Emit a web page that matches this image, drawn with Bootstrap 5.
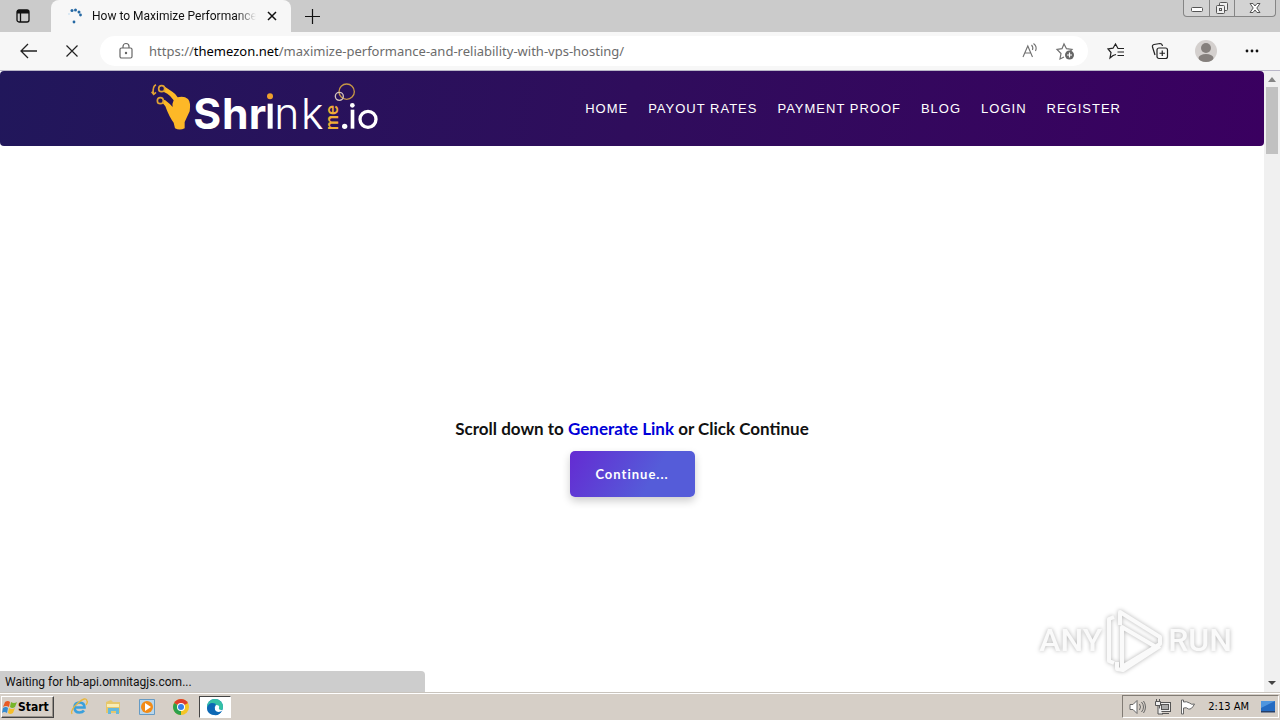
<!DOCTYPE html>
<html lang="en">
<head>
<meta charset="utf-8">
<meta name="viewport" content="width=device-width, initial-scale=1">
<title>How to Maximize Performance</title>
<link href="https://cdn.jsdelivr.net/npm/bootstrap@5.3.0/dist/css/bootstrap.min.css" rel="stylesheet">
<style>
  body { font-family: Roboto, "Open Sans", sans-serif; font-size: 12px; line-height: 16px; color: #111; background: #fff; }
  button { border: 0; background: none; padding: 0; color: inherit; }
  svg { display: block; flex: none; overflow: visible; }
  .tabstrip { height: 32px; background: #cbcbcb; }
  .tab-menu { width: 46px; }
  .browser-tab { width: 240px; background: #f7f7f7; border-radius: 8px 8px 0 0; padding: 0 12px 0 16px; margin-left: 5px; }
  .tab-title { width: 164px; margin: 0 10px 0 9px; -webkit-mask-image: linear-gradient(90deg, #000 88%, transparent); }
  .new-tab { width: 42px; }
  .window-buttons { height: 17px; margin-right: 4px; border: 1px solid #858585; border-top: 0; border-radius: 0 0 4px 4px; background: #d3d3d3; }
  .window-buttons button { width: 25px; }
  .window-buttons button + button { border-left: 1px solid #858585; }
  .window-buttons button:last-child { width: 41px; }
  .toolbar { height: 39px; padding: 0 6px; background: #f7f7f7; border-bottom: 1px solid #b9b6c8; }
  .tool { width: 44px; }
  .profile { margin: 0 2px; }
  .address { height: 30px; background: #fff; border-radius: 15px; margin: 0 6px; padding: 0 11px 0 18px; }
  .address-text { font: 13px/18px "Noto Sans", "Open Sans", sans-serif; color: #6c6c6c; margin-left: 15px; text-decoration: none; }
  .address-text b { font-weight: 400; color: #000; }
  .site-header { height: 75px; border-radius: 4px; background: linear-gradient(100deg, #21175b, #2f0d5c 50%, #3a0060); }
  .site-inner { width: 100%; max-width: 1004px; padding: 0 3px 0 20px; }
  .site-nav a { font: 13px/20px "Liberation Sans", sans-serif; letter-spacing: 1px; color: #fff; padding: 0 10px; }
  .ad-space { height: 272px; }
  .prompt { font: 700 17px/21px Lato, sans-serif; color: #111; }
  .prompt a { color: #0000d8; text-decoration: none; }
  .btn-continue { width: 125px; height: 46px; font: 700 13px/20px Lato, sans-serif; letter-spacing: 1px; color: #fff; border-radius: 5px; background: linear-gradient(120deg, #642bd2, #555cd9 65%); box-shadow: 0 4px 8px rgba(0,0,0,.2); }
  .scroll-track { width: 16px; background: #f0f0f0; }
  .scroll-track button { height: 16px; }
  .scroll-thumb { width: 12px; height: 67px; background: #c1c1c1; }
  .status { width: 425px; height: 21px; padding: 0 5px; background: #cdcdcd; border-top-right-radius: 4px; }
  .watermark { right: 48px; bottom: 20px; gap: 4px; color: #fafafa; font: 500 32px/64px Roboto, sans-serif; filter: drop-shadow(0 0 2px rgba(0,0,0,.3)); }
  .taskbar { height: 28px; background: #d6cfc7; border-top: 1px solid #c9c4bd; box-shadow: inset 0 1px #fff; }
  .start { width: 53px; height: 22px; margin-left: 1px; font: 700 12px/16px "DejaVu Sans Condensed", "DejaVu Sans", sans-serif; color: #000; border: 1px solid; border-color: #fff #444 #444 #fff; box-shadow: inset -1px -1px #98928a; }
  .quick { width: 32px; height: 22px; }
  .quick-group { margin-left: 9px; gap: 2px; }
  .quick.current { background: #fff; border: 1px solid; border-color: #444 #fff #fff #444; }
  .tray { height: 23px; border: 1px solid; border-color: #817b74 #fff #fff #817b74; padding: 0 2px 0 6px; gap: 7px; margin-right: 1px; font: 11px/16px "DejaVu Sans Condensed", "DejaVu Sans", sans-serif; color: #000; }
</style>
</head>
<body class="d-flex flex-column vh-100 overflow-hidden">

<div class="tabstrip d-flex">
  <button class="tab-menu d-flex align-items-center justify-content-center" aria-label="Tab actions">
    <svg width="16" height="16" viewBox="0 0 16 16" fill="none" stroke="#111" stroke-width="1.3"><rect x="2" y="2" width="12" height="12" rx="2"/><path d="M2 3h12M2 4.500h12" stroke-width="2"/><path d="M5.500 5v9"/></svg>
  </button>
  <div class="browser-tab d-flex align-items-center">
    <svg width="16" height="16" viewBox="0 0 16 16" fill="#2568a3"><circle cx="5" cy="2.500" r="1.500"/><circle cx="8.500" cy="2" r="1.500"/><circle cx="12" cy="4" r="1.500"/><circle cx="13.500" cy="7" r="1.400"/><circle cx="7" cy="14" r="1.400"/><circle cx="2" cy="6" r="1" fill="#d2e5f3"/></svg>
    <span class="tab-title text-nowrap">How to Maximize Performance</span>
    <button aria-label="Close tab"><svg width="12" height="12" viewBox="0 0 12 12" stroke="#111" stroke-width="1.500"><path d="M2 2l8 8M10 2l-8 8"/></svg></button>
  </div>
  <button class="new-tab d-flex align-items-center justify-content-center" aria-label="New tab"><svg width="15" height="15" viewBox="0 0 15 15" stroke="#111" stroke-width="1.200"><path d="M7.500 0v15M0 7.500h15"/></svg></button>
  <div class="window-buttons d-flex ms-auto">
    <button class="d-flex align-items-center justify-content-center" aria-label="Minimize"><svg width="14" height="14" fill="#fff" stroke="#555"><rect x="1.500" y="6.500" width="11" height="4" rx="1"/></svg></button>
    <button class="d-flex align-items-center justify-content-center" aria-label="Restore"><svg width="14" height="14" fill="#eee" stroke="#555"><rect x="4.500" y="1.500" width="8" height="8" rx="1"/><rect x="1.500" y="4.500" width="8" height="8" rx="1"/><rect x="4.500" y="7.500" width="2" height="2"/></svg></button>
    <button class="d-flex align-items-center justify-content-center" aria-label="Close"><svg width="14" height="14" fill="#fff" stroke="#555"><path d="M2 2.500h3l2 2.500 2-2.500h3L8.800 7l3.200 4.500H9L7 9l-2 2.500H2L5.200 7z"/></svg></button>
  </div>
</div>

<div class="toolbar d-flex align-items-center">
  <button class="tool d-flex justify-content-center" aria-label="Back"><svg width="17" height="16" viewBox="0 0 17 16" fill="none" stroke="#222" stroke-width="1.300"><path d="M8 1L1 8l7 7M1 8h16"/></svg></button>
  <button class="tool d-flex justify-content-center" aria-label="Stop"><svg width="14" height="14" viewBox="0 0 14 14" stroke="#222" stroke-width="1.200"><path d="M1.500 1.500l11 11M12.500 1.500l-11 11"/></svg></button>
  <div class="address d-flex align-items-center flex-grow-1">
    <svg width="16" height="18" viewBox="0 0 16 18" fill="none" stroke="#666" stroke-width="1.200"><rect x="2" y="6" width="12" height="10" rx="1.500"/><path d="M5 6V4.500a3 3 0 0 1 6 0V6"/><circle cx="8" cy="11" r=".6" fill="#666"/></svg>
    <a class="address-text text-nowrap" href="#">https://<b>themezon.net</b>/maximize-performance-and-reliability-with-vps-hosting/</a>
    <button class="ms-auto" aria-label="Read aloud"><svg width="18" height="18" viewBox="0 0 18 18" fill="none" stroke="#707070" stroke-width="1.100"><path d="M2 15L6.800 4l4.700 11M3.800 11h6M10.500 3q2 2 1 5M12.500 1.500q4 3 2 7.500"/></svg></button>
    <button class="ms-3" aria-label="Add to favorites"><svg width="22" height="20" viewBox="0 0 22 20" fill="none" stroke="#707070" stroke-width="1.200"><path d="M9 16l-4 2 1-5.500-4-4 5-.8L9 3l2.500 4.700 5.500.8-2 2"/><circle cx="14.500" cy="14" r="4.500" fill="#666" stroke="none"/><path d="M12 14h5M14.500 11.500v5" stroke="#fff"/></svg></button>
  </div>
  <button class="tool d-flex justify-content-center" aria-label="Favorites"><svg width="18" height="18" viewBox="0 0 18 18" fill="none" stroke="#222" stroke-width="1.200"><path d="M6 13.500L3 16l1-5.500L1 7l5-.8L8.500 2 11 6.500h6M10.500 10H17M10.500 13.500H17M6 13.500l3-1"/></svg></button>
  <button class="tool d-flex justify-content-center" aria-label="Collections"><svg width="18" height="18" viewBox="0 0 18 18" fill="none" stroke="#222" stroke-width="1.200"><rect x="6" y="6" width="10.500" height="10.500" rx="2"/><path d="M11.250 8.500v5.500M8.500 11.250H14M4 13L1.500 5q-.5-2 1.500-2.500L9 1.500q2 0 2.500 2.500"/></svg></button>
  <button class="tool profile d-flex justify-content-center" aria-label="Profile"><svg width="22" height="22" viewBox="0 0 22 22"><circle cx="11" cy="11" r="11" fill="#d4d0ce"/><circle cx="11" cy="8" r="5" fill="#85807d"/><ellipse cx="11" cy="18" rx="7.500" ry="4" fill="#85807d"/></svg></button>
  <button class="tool d-flex justify-content-center" aria-label="Settings and more"><svg width="16" height="4" fill="#111"><circle cx="3" cy="2" r="1.400"/><circle cx="8" cy="2" r="1.400"/><circle cx="13" cy="2" r="1.400"/></svg></button>
</div>

<div class="d-flex flex-grow-1 position-relative overflow-hidden">
  <div class="flex-grow-1">
    <header class="site-header d-flex">
      <div class="site-inner mx-auto d-flex align-items-center justify-content-between">
        <a href="#" class="pb-1" aria-label="ShrinkMe.io">
          <svg width="230" height="52" viewBox="30 30 690 156" font-family="Inter, sans-serif" fill="#fff">
            <path fill="#fdb827" d="M70 44L98 63Q109 70 113 79Q132 74 144 84Q153 94 149 121L134 153V172Q119 179 105 172L101 155Q88 139 76 106L66 94L74 86Q90 98 98 108Q96 98 101 88Q92 74 82 68L66 60Z"/>
            <g fill="#231658" stroke="#e0a233" stroke-width="5"><circle cx="65" cy="53" r="9"/><circle cx="61" cy="89" r="9"/><path fill="none" d="M48 41q-11 5-8 27M35 62l6 8 7-6"/></g>
            <g font-size="128" font-weight="700"><text x="160" y="173">S</text><text x="246" y="173">h</text><text x="326" y="173">r</text></g>
            <path d="M383 98h15v75h-15z"/><circle cx="390" cy="76" r="9" fill="#efa02c"/>
            <g font-size="128" font-weight="300"><text x="403" y="173">n</text><text x="483" y="173">k</text></g>
            <text transform="translate(594 178) rotate(-90)" font-size="51" font-weight="600" fill="#f0ad35">me</text>
            <circle cx="614" cy="166" r="8"/><path d="M632 116h11v57h-11z"/><circle cx="637" cy="103" r="7"/>
            <circle cx="684" cy="145" r="24" fill="none" stroke="#fff" stroke-width="10"/>
            <g fill="none" stroke-width="4"><circle cx="620" cy="62" r="23" stroke="#c69645"/><circle cx="598" cy="76" r="12" stroke="#d4c4bd"/></g>
          </svg>
        </a>
        <nav class="site-nav nav flex-nowrap">
          <a href="#" class="text-decoration-none">HOME</a><a href="#" class="text-decoration-none">PAYOUT RATES</a><a href="#" class="text-decoration-none">PAYMENT PROOF</a><a href="#" class="text-decoration-none">BLOG</a><a href="#" class="text-decoration-none">LOGIN</a><a href="#" class="text-decoration-none">REGISTER</a>
        </nav>
      </div>
    </header>
    <main class="text-center">
      <div class="ad-space"></div>
      <p class="prompt mb-2 pb-1">Scroll down to <a href="#">Generate Link</a> or Click Continue</p>
      <button class="btn-continue">Continue...</button>
    </main>
  </div>
  <div class="scroll-track d-flex flex-column align-items-center">
    <button aria-label="Scroll up"><svg width="8" height="16"><path d="M0 11l4-5 4 5z" fill="#858585"/></svg></button>
    <div class="scroll-thumb"></div>
    <button class="mt-auto" aria-label="Scroll down"><svg width="8" height="16"><path d="M0 5l4 4 4-4z" fill="#444"/></svg></button>
  </div>
  <div class="status position-absolute bottom-0 start-0 d-flex align-items-center">Waiting for hb-api.omnitagjs.com...</div>
  <div class="watermark position-absolute d-flex align-items-center">
    <span>ANY</span>
    <svg width="58" height="64" viewBox="0 0 58 64" fill="none" stroke="#fafafa" stroke-width="4" stroke-linejoin="round"><path d="M14 17V4l40 25v7L16 59V19l34 20"/><path d="M8 9l-5 2v42l5 2M11 54v7l6 1 37-24"/></svg>
    <span>RUN</span>
  </div>
</div>

<footer class="taskbar d-flex align-items-center">
  <button class="start d-flex align-items-center">
    <svg width="16" height="16" viewBox="0 0 16 16"><path d="M3 3q3-2 5 0L7 8q-3-2-6 0z" fill="#e85b25"/><path d="M9 3q3 2 6 0l-2 5q-3 2-5 0z" fill="#77b52b"/><path d="M1 9q3-2 5 0l-1 5q-3-2-5 0z" fill="#348bd0"/><path d="M7 9q3 2 6 0l-2 5q-3 2-5 0z" fill="#f6be28"/></svg>Start
  </button>
  <div class="quick-group d-flex">
    <button class="quick d-flex align-items-center justify-content-center" aria-label="Internet Explorer"><svg width="18" height="18" viewBox="0 0 18 18" fill="none"><path d="M4.500 9.500h10q0-5-5-5t-5 5 5 5q3 0 4.500-2" stroke="#3aa0dc" stroke-width="2.600"/><path d="M2 16Q0 12 8 5t9-2q1 1-1 4" stroke="#e8b63b" stroke-width="1.300"/></svg></button>
    <button class="quick d-flex align-items-center justify-content-center" aria-label="File Explorer"><svg width="18" height="18" viewBox="0 0 18 18"><path d="M2 4l5-2 2 2h7v11H2z" fill="#e6c76c"/><path d="M3 6h12v3H3z" fill="#f9edb4"/><path d="M4 16v-6h11v6h-3v-3H7v3z" fill="#65b9dc"/></svg></button>
    <button class="quick d-flex align-items-center justify-content-center" aria-label="Media Player"><svg width="18" height="18" viewBox="0 0 18 18"><path d="M1.500 1.500h15v15h-15z" fill="#b9d6eb" stroke="#669bc4"/><circle cx="9" cy="9" r="6" fill="#f28b16"/><path d="M7 5l6 4-6 4z" fill="#fff"/></svg></button>
    <button class="quick d-flex align-items-center justify-content-center" aria-label="Chrome"><svg width="18" height="18" viewBox="0 0 18 18"><circle cx="9" cy="9" r="8" fill="#f4c525"/><path d="M9 9L2.100 5A8 8 0 0 1 15.900 5z" fill="#df3d2d"/><path d="M9 9L2.100 5A8 8 0 0 0 9 17z" fill="#2ca14d"/><circle cx="9" cy="9" r="4" fill="#fff"/><circle cx="9" cy="9" r="3" fill="#377fe8"/></svg></button>
    <button class="quick current d-flex align-items-center justify-content-center" aria-label="Edge"><svg width="18" height="18" viewBox="0 0 18 18"><circle cx="9" cy="9" r="8" fill="#147bc4"/><path d="M1 9a8 8 0 0 1 16 0q0 4-5 3-2-1-1-3-1-5-10 0z" fill="#35c1a5"/><path d="M1 10q2-7 9-4-4 4 1 8 3 1 5-1-3 5-8 4-7-1-7-7z" fill="#0d68b4"/><path d="M10 7q4 0 3 3-1 2 4 2-5 4-8 0-1-3 1-5z" fill="#fff"/></svg></button>
  </div>
  <div class="tray d-flex align-items-center ms-auto">
    <svg width="18" height="18" viewBox="0 0 18 18" fill="#fff" stroke="#666"><path d="M1 6.500h3l4-4v13l-4-4H1z"/><path d="M10.500 6q2 3 0 6M12.500 4q4 5 0 10M14.500 3q4 6 0 12" fill="none"/></svg>
    <svg width="18" height="18" viewBox="0 0 18 18" fill="#eee" stroke="#555"><rect x="5.500" y="4.500" width="11" height="9"/><rect x="7.500" y="6.500" width="7" height="5" fill="#aaa"/><path d="M8 15.500h7M1.500 3.500h5v4h-5zM2.500 1v2M5.500 1v2M4 8v8h5"/></svg>
    <svg width="18" height="18" viewBox="0 0 18 18" fill="#fff" stroke="#666"><path d="M2.500 2v14h2v-6q3-1 5 1 3 1 6-5-3 1-5-1-3-2-6-1V2z"/></svg>
    <span class="ps-1 pe-1 text-nowrap">2:13 AM</span>
    <svg width="16" height="16" viewBox="0 0 16 16"><path d="M1 2h14v10H1z" fill="#246bc2"/><path d="M1 2h14L1 9z" fill="#4f96df"/><path d="M1 12h14v1.500H1z" fill="#263f68"/></svg>
  </div>
</footer>
<script src="https://cdn.jsdelivr.net/npm/bootstrap@5.3.0/dist/js/bootstrap.bundle.min.js"></script>
</body>
</html>
